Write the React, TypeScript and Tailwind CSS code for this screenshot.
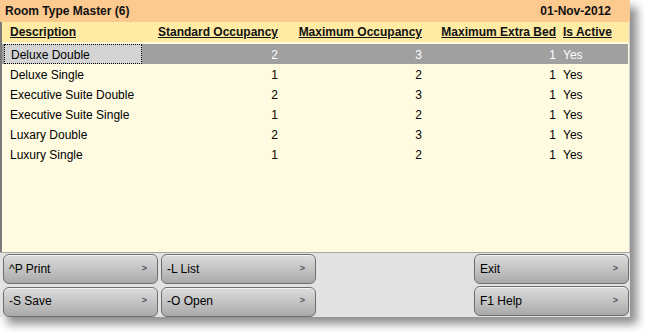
import React from 'react';

const rows = [
  { name: 'Deluxe Double', std: 2, max: 3, extra: 1, active: 'Yes' },
  { name: 'Deluxe Single', std: 1, max: 2, extra: 1, active: 'Yes' },
  { name: 'Executive Suite Double', std: 2, max: 3, extra: 1, active: 'Yes' },
  { name: 'Executive Suite Single', std: 1, max: 2, extra: 1, active: 'Yes' },
  { name: 'Luxary Double', std: 2, max: 3, extra: 1, active: 'Yes' },
  { name: 'Luxury Single', std: 1, max: 2, extra: 1, active: 'Yes' },
];

function Btn({ label }: { label: string }) {
  return (
    <button className="w-[155px] h-[30px] rounded-[6px] border border-[#6e6e6e] bg-gradient-to-b from-[#dcdcdc] via-[#c4c4c4] to-[#a9a9a9] shadow-[inset_0_1px_0_rgba(255,255,255,0.7)] flex items-center justify-between pl-[5px] pr-[10px] pb-[1px] text-[12px] text-black">
      <span>{label}</span>
      <span className="text-[9px] text-[#555] font-bold">&gt;</span>
    </button>
  );
}

export default function App() {
  return (
    <div className="w-[645px] h-[332px] bg-white font-['Liberation_Sans',Arial,sans-serif]">
      <div className="w-[630px] h-[317px] flex flex-col shadow-[7px_7px_9px_rgba(0,0,0,0.45)]">
        {/* Title */}
        <div className="h-[22px] bg-[#fcc98f] flex items-center justify-between pl-[5px] pr-[19px] text-[12px] font-bold text-[#111]">
          <span>Room Type Master (6)</span>
          <span>01-Nov-2012</span>
        </div>

        {/* Grid */}
        <div className="flex-1 flex flex-col bg-[#fffbe0] border-l-2 border-l-[#7a7a7a] border-r border-r-[#cfcfcf]">
          <div className="h-[20px] bg-[#ffeba3] flex items-center text-[12px] font-bold text-[#111] underline">
            <span className="w-[154px] pl-[8px]">Description</span>
            <span className="w-[122px] text-right">Standard Occupancy</span>
            <span className="w-[144px] text-right">Maximum Occupancy</span>
            <span className="w-[134px] text-right">Maximum Extra Bed</span>
            <span className="pl-[7px]">Is Active</span>
          </div>
          <div className="pt-[2px] flex flex-col">
            {rows.map((r, i) => {
              const sel = i === 0;
              return (
                <div
                  key={r.name}
                  className={`h-[20px] flex items-center text-[12px] mr-[1px] pt-[1px] ${sel ? 'bg-[#a0a0a0] text-white' : 'text-black'}`}
                >
                  <span
                    className={`w-[138px] h-[20px] -mt-[1px] ml-[2px] pl-[6px] pt-[1px] flex items-center ${sel ? 'bg-[#d4d4d4] text-black border border-dotted border-black' : ''}`}
                  >
                    {r.name}
                  </span>
                  <span className="w-[136px] text-right">{r.std}</span>
                  <span className="w-[144px] text-right">{r.max}</span>
                  <span className="w-[134px] text-right">{r.extra}</span>
                  <span className="pl-[7px]">{r.active}</span>
                </div>
              );
            })}
          </div>
        </div>

        {/* Buttons */}
        <div className="h-[65px] bg-[#e2e2e2] border-t border-t-[#a8a8a8] flex justify-between pl-[3px] pr-[1px] pt-[1px]">
          <div className="grid grid-cols-[155px_155px] gap-x-[3px] gap-y-[2px]">
            <Btn label="^P Print" />
            <Btn label="-L List" />
            <Btn label="-S Save" />
            <Btn label="-O Open" />
          </div>
          <div className="flex flex-col gap-[2px]">
            <Btn label="Exit" />
            <Btn label="F1 Help" />
          </div>
        </div>
      </div>
    </div>
  );
}
